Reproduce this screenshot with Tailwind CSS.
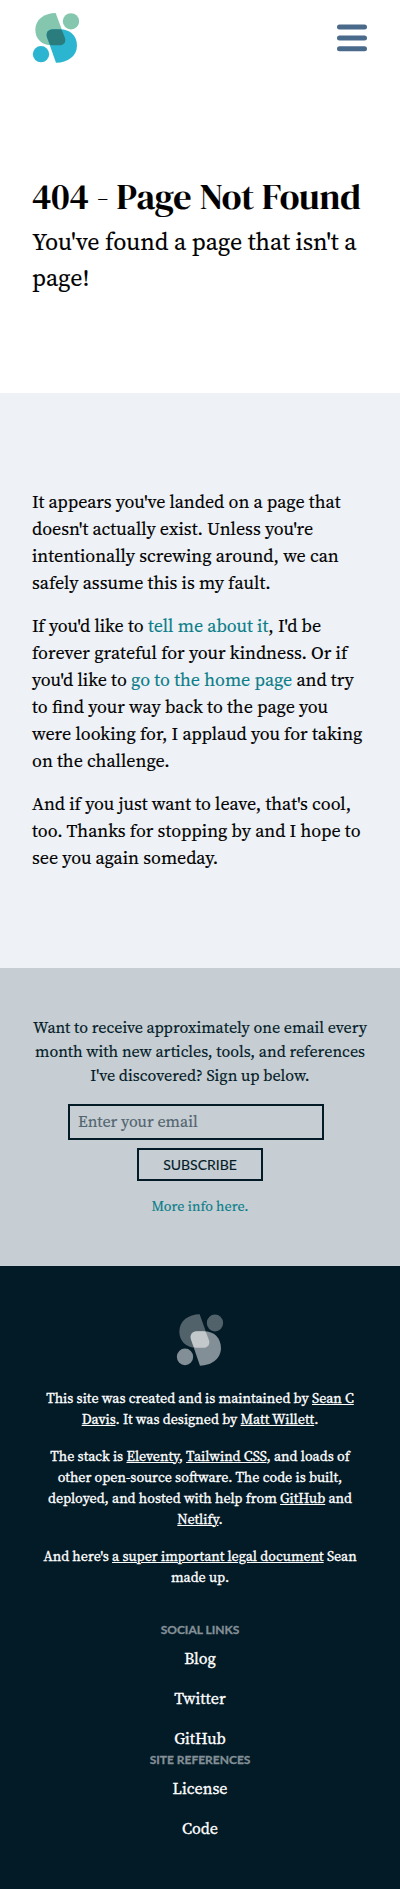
<!DOCTYPE html>
<html lang="en">
<head>
<meta charset="utf-8">
<title>404 - Page Not Found</title>
<script src="https://cdn.jsdelivr.net/npm/@tailwindcss/browser@4"></script>
</head>
<body class="bg-white font-['Source_Serif_4','Liberation_Serif',serif] text-black antialiased [-webkit-text-stroke:0.15px]">
<header class="flex h-[76px] items-start justify-between px-8">
  <a href="#" aria-label="Home" class="block pt-[12.700px]">
    <svg class="block h-[50px] w-[47.300px]" viewBox="36 38 142 150">
      <path fill="#84c6ae" d="M107 38C74 38 46 57 46 88C46 116 66 135 96 135H118C131 135 139 126 135 113Z"/>
      <circle fill="#84c6ae" cx="153" cy="63" r="24.500"/>
      <path fill="#2cb5d0" d="M108 187C143 187 171 167 171 136C171 106 150 87 120 87H98C84 87 77 98 81 111Z"/>
      <circle fill="#2cb5d0" cx="63" cy="161.500" r="24.500"/>
      <path fill="#2b7d7d" d="M98 87H120Q124 87 126 90L135 113C139 126 131 135 118 135H96Q91 135 89 132L81 111C77 98 84 87 98 87Z"/>
    </svg>
  </a>
  <button aria-label="Menu" class="mr-px pt-[24px]">
    <svg class="block h-[28px] w-[30px]" viewBox="0 0 30 28" stroke="#4a6a8b" stroke-width="5" stroke-linecap="round">
      <path d="M2.500 3H27.500M2.500 13.900H27.500M2.500 24.800H27.500"/>
    </svg>
  </button>
</header>
<section class="h-[317px] px-8 pt-[98px]">
  <h1 class="mb-[5px] font-['DM_Serif_Display','Liberation_Serif',serif] text-4xl leading-[45px] font-normal whitespace-nowrap [-webkit-text-stroke:0.15px]">404 - Page Not Found</h1>
  <p class="text-2xl leading-9">You've found a page that isn't a page!</p>
</section>
<main class="flex flex-col gap-4 bg-[#eef1f6] px-8 pt-[95px] pb-[97px] text-lg leading-[27px]">
  <p>It appears you've landed on a page that doesn't actually exist. Unless you're intentionally screwing around, we can safely assume this is my fault.</p>
  <p>If you'd like to <a href="#" class="text-[#0a7d88] [-webkit-text-stroke:0.15px_#0a7d88]">tell me about it</a>, I'd be forever grateful for your kindness. Or if you'd like to <a href="#" class="text-[#0a7d88] [-webkit-text-stroke:0.15px_#0a7d88]">go to the home page</a> and try to find your way back to the page you were looking for, I applaud you for taking on the challenge.</p>
  <p>And if you just want to leave, that's cool, too. Thanks for stopping by and I hope to see you again someday.</p>
</main>
<section class="flex h-[298px] flex-col items-center bg-[#c6ced4] px-8 pt-[47px] text-center text-base text-[#031b27]">
  <p>Want to receive approximately one email every month with new articles, tools, and references I've discovered? Sign up below.</p>
  <input type="email" placeholder="Enter your email" class="mt-[17px] mr-2 h-9 w-64 border-2 border-[#031b27] bg-transparent px-2 pb-0.5 text-base placeholder:text-[#52646e]">
  <button class="mt-2 h-[33px] w-[126px] border-2 border-[#031b27] font-['Lato',sans-serif] text-sm">SUBSCRIBE</button>
  <a href="#" class="mt-[15px] text-sm leading-[21px] text-[#0a7d88]">More info here.</a>
</section>
<footer class="flex flex-col items-center bg-[#031b27] px-8 pt-12 pb-12 text-center text-white">
  <svg class="block h-[52px] w-[47.300px]" viewBox="36 37 142 151" preserveAspectRatio="none">
    <path fill="#52626b" d="M107 38C74 38 46 57 46 88C46 116 66 135 96 135H118C131 135 139 126 135 113Z"/>
    <circle fill="#52626b" cx="153" cy="63" r="24.500"/>
    <path fill="#838f96" d="M108 187C143 187 171 167 171 136C171 106 150 87 120 87H98C84 87 77 98 81 111Z"/>
    <circle fill="#838f96" cx="63" cy="161.500" r="24.500"/>
    <path fill="#c3c8cb" d="M98 87H120Q124 87 126 90L135 113C139 126 131 135 118 135H96Q91 135 89 132L81 111C77 98 84 87 98 87Z"/>
  </svg>
  <div class="mt-[22px] flex flex-col gap-4 px-2 text-sm leading-[21px] [-webkit-text-stroke:0.3px_white]">
    <p>This site was created and is maintained by <a href="#" class="underline">Sean C Davis</a>. It was designed by <a href="#" class="underline">Matt Willett</a>.</p>
    <p>The stack is <a href="#" class="underline">Eleventy</a>, <a href="#" class="underline">Tailwind CSS</a>, and loads of other open-source software. The code is built, deployed, and hosted with help from <a href="#" class="underline">GitHub</a> and <a href="#" class="underline">Netlify</a>.</p>
    <p>And here's <a href="#" class="underline">a super important legal document</a> Sean made up.</p>
  </div>
  <h2 class="mt-[33px] font-['Lato',sans-serif] text-xs leading-[18px] font-bold text-[#838f96] [-webkit-text-stroke:0.3px_#838f96]">SOCIAL LINKS</h2>
  <ul class="mt-[7px] mb-px flex flex-col gap-4 [-webkit-text-stroke:0.3px_white]">
    <li>Blog</li>
    <li>Twitter</li>
    <li>GitHub</li>
  </ul>
  <h2 class="font-['Lato',sans-serif] text-xs leading-[18px] font-bold text-[#838f96] [-webkit-text-stroke:0.3px_#838f96]">SITE REFERENCES</h2>
  <ul class="mt-[7px] mb-px flex flex-col gap-4 [-webkit-text-stroke:0.3px_white]">
    <li>License</li>
    <li>Code</li>
  </ul>
</footer>
</body>
</html>
